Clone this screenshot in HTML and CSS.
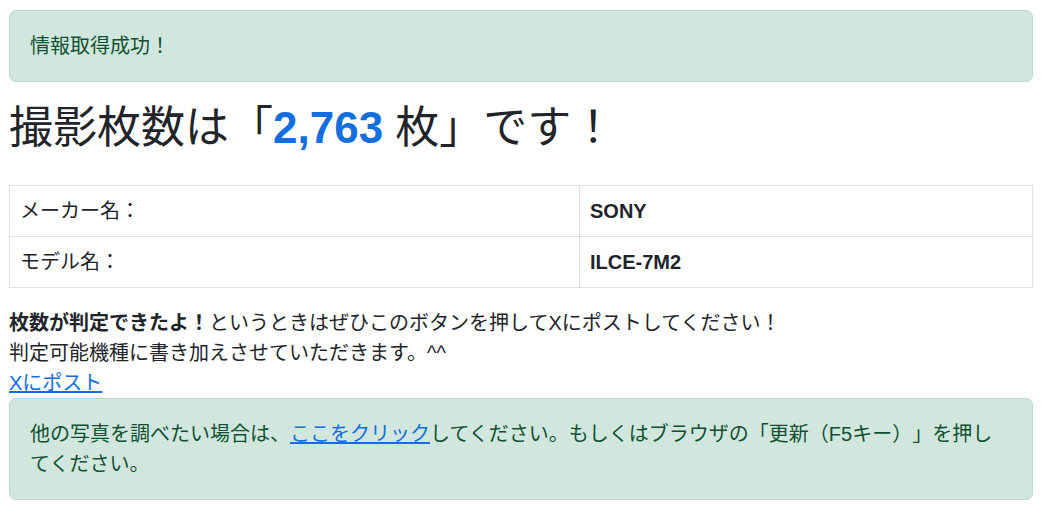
FILE: index.html
```html
<!DOCTYPE html>
<html lang="ja">
<head>
<meta charset="utf-8">
<title>撮影枚数</title>
<link rel="stylesheet" href="styles.css">
</head>
<body>
<div class="container">
  <div class="alert">情報取得成功！</div>
  <h1 class="title">撮影枚数は「<span class="count">2,763</span> 枚」です！</h1>
  <table class="info">
    <tbody>
      <tr>
        <td class="label">メーカー名：</td>
        <td class="value">SONY</td>
      </tr>
      <tr>
        <td class="label">モデル名：</td>
        <td class="value">ILCE-7M2</td>
      </tr>
    </tbody>
  </table>
  <div class="note">
    <strong>枚数が判定できたよ！</strong>というときはぜひこのボタンを押してXにポストしてください！<br>
    判定可能機種に書き加えさせていただきます。^^<br>
    <a href="#" class="link">Xにポスト</a>
  </div>
  <div class="alert alert-wide">他の写真を調べたい場合は、<a href="#" class="link">ここをクリック</a>してください。もしくはブラウザの「更新（F5キー）」を押してください。</div>
</div>
</body>
</html>
```
FILE: styles.css
```css
html, body {
  margin: 0;
  padding: 0;
  background: #ffffff;
}

body {
  font-family: "Liberation Sans", "Noto Sans CJK JP", sans-serif;
  font-size: 20px;
  line-height: 1.5;
  color: #212529;
  text-spacing-trim: space-all;
}

.container {
  padding: 10px 9px;
}

.alert {
  background: #d1e7dd;
  border: 1px solid #badbcc;
  color: #0f5132;
  border-radius: 7px;
  padding: 20px;
  margin-bottom: 20px;
}

.alert-wide {
  padding-right: 28px;
}

.title {
  font-size: 44px;
  font-weight: 400;
  line-height: 1.2;
  margin: 0 0 30px;
  color: #212529;
}

.count {
  color: #146ee0;
  font-weight: 700;
}

.info {
  width: 100%;
  border-collapse: collapse;
  margin-bottom: 20px;
}

.info td {
  border: 1px solid #dee2e6;
  padding: 10px;
  vertical-align: top;
}

.label {
  width: 549px;
}

.value {
  font-weight: 700;
}

.note {
  margin: 0;
}

.note strong {
  font-weight: 700;
}

.link {
  color: #146ee0;
  text-decoration: underline;
}
```
